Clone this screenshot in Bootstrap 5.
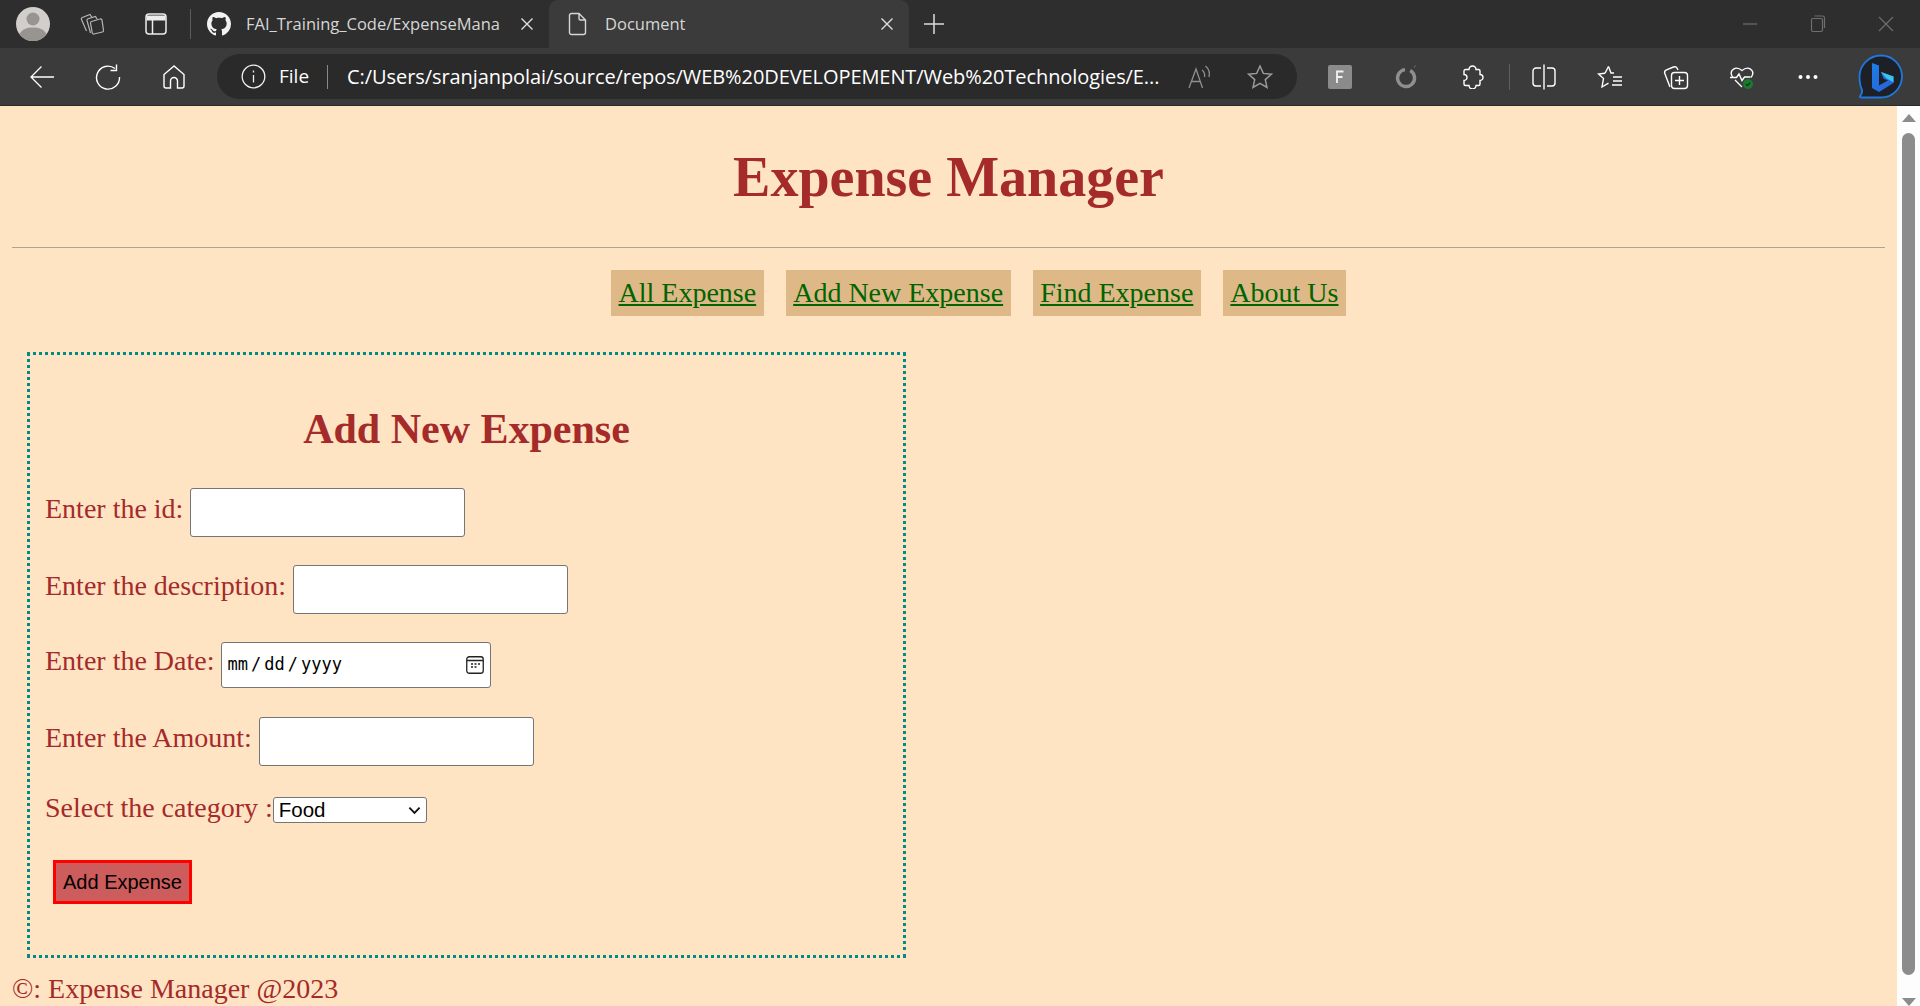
<!DOCTYPE html>
<html lang="en">
<head>
  <meta charset="UTF-8">
  <meta name="viewport" content="width=device-width, initial-scale=1">
  <title>Document</title>
  <link href="https://cdn.jsdelivr.net/npm/bootstrap@5.3.3/dist/css/bootstrap.min.css" rel="stylesheet">
  <style>
    html, body { height: 100%; overflow: hidden; }
    body { background: #ffe4c4; font-family: "Liberation Serif", serif; }

    /* browser chrome */
    .tab-strip { height: 48px; background: #2e2e2e; color: #d6d6d6; font-family: "Open Sans", sans-serif; font-size: 16.500px; }
    .strip-slot { width: 64px; height: 48px; }
    .avatar-slot { width: 60px; padding-left: 16px; }
    .strip-sep { width: 1px; height: 30px; background: #5c5c5c; margin: 0 4px 0 2px; }
    .page-tab { height: 48px; }
    .tab-one { width: 354px; padding-left: 12px; padding-right: 15px; }
    .tab-two { width: 360px; background: #3b3b3b; border-radius: 9px 9px 0 0; padding-left: 19px; padding-right: 15px; }
    .tab-title { white-space: nowrap; flex: 1; margin-left: 15px; margin-right: 8px; }
    .tab-two .tab-title { margin-left: 17px; }
    .new-tab { width: 50px; margin-left: 0; }
    .win-btn { width: 68px; }

    .tool-bar { height: 58px; background: #3b3b3b; border-bottom: 1px solid #2a2a2a; padding-left: 9px; color: #fff; }
    .tool-slot { width: 66px; height: 45px; flex: none; }
    .addr-pill { width: 1080px; height: 45px; background: #2a2a2a; border-radius: 23px; margin-left: 10px; margin-right: 10px; padding-left: 24px; font-family: "Open Sans", sans-serif; font-size: 19px; flex: none; }
    .addr-file { margin-left: 13px; }
    .addr-sep { width: 1px; height: 24px; background: #8a8a8a; margin-left: 18px; margin-right: 19px; }
    .addr-url { width: 823px; white-space: nowrap; font-size: 20px; letter-spacing: -.08px; }
    .addr-slot { width: 60px; }
    .tool-sep { width: 1px; height: 26px; background: #5e5e5e; margin-left: 4px; margin-right: 1px; }
    .bing-slot { width: 72px; margin-left: 3px; flex: none; }

    /* page */
    .page-row { height: 900px; }
    .page-body { padding: 0 12px; overflow: hidden; }
    .scroll-rail { width: 23px; background: #fdfdfd; position: relative; }
    .rail-thumb { width: 13px; height: 842px; margin: 27px auto 0; background: #8c8c8c; border-radius: 7px; }
    .rail-up, .rail-down { position: absolute; left: 5px; width: 0; height: 0; border-left: 7px solid transparent; border-right: 7px solid transparent; }
    .rail-up { top: 8px; border-bottom: 8px solid #8c8c8c; }
    .rail-down { bottom: 0; border-top: 8px solid #8c8c8c; }

    .site-title { font-family: "Liberation Serif", serif; font-size: 56px; font-weight: 700; color: #a52a2a; line-height: 64px; margin: 39px 0 38px; }
    .site-rule { margin: 0; border-top: 1px solid #a9a49c; opacity: 1; }
    .site-links { margin-top: 22px; gap: 22px; padding-left: 60px; }
    .site-link { display: block; height: 46px; padding: 0 7.5px; background: #deb887; color: #006400; font-size: 28px; line-height: 46px; }
    .site-link:hover { color: #006400; }

    .add-box { width: 879px; height: 606px; margin: 36px 0 0 15px; border: 3px dotted #008b8b; padding: 0 15px; color: #a52a2a; font-size: 28px; }
    .add-title { font-family: "Liberation Serif", serif; font-size: 42px; font-weight: 700; color: #a52a2a; line-height: 48px; margin: 50px 0 0; }
    .add-row { line-height: 32px; }
    .add-row .form-control { display: inline-block; width: 275px; height: 49px; padding: 1px 2px; border: 1px solid #767676; border-radius: 3px; vertical-align: baseline; }
    .add-row input[type=date] { width: 270px; height: 46px; padding: 1px 6px 1px 5px; font-family: "DejaVu Sans Mono", monospace; font-size: 17px; color: #000; }
    .add-row input[type=date]::-webkit-datetime-edit-text { padding: 0 3px; }
    .add-row input[type=date]::-webkit-calendar-picker-indicator {
      width: 18px; height: 18px; padding: 0; margin: 0 0 0 4px;
      background: url("data:image/svg+xml,%3Csvg xmlns='http://www.w3.org/2000/svg' viewBox='0 0 18 18' fill='none'%3E%3Crect x='.75' y='.75' width='16.500' height='16.500' rx='2.500' stroke='%23222' stroke-width='1.300'/%3E%3Cpath d='M1 4.500h16' stroke='%23222' stroke-width='1.300'/%3E%3Cpath d='M5 8h2M8.500 8h2M12 8h2M5 11h2M8.500 11h2' stroke='%23222' stroke-width='1.500'/%3E%3C/svg%3E") center / contain no-repeat;
    }
    .row-id { margin-top: 35px; }
    .row-desc { margin-top: 28px; }
    .row-date { margin-top: 28px; }
    .row-amount { margin-top: 29px; }
    .row-cat { margin-top: 26px; }
    .cat-select { -webkit-appearance: none; appearance: none; width: 154px; height: 26px; padding: 0 5px; font-family: "Liberation Sans", sans-serif; font-size: 20.500px; line-height: 24px; border: 1px solid #767676; border-radius: 3px; color: #000; vertical-align: baseline;
      background: #fff url("data:image/svg+xml,%3Csvg xmlns='http://www.w3.org/2000/svg' viewBox='0 0 14 9' fill='none'%3E%3Cpath d='M1.500 1.500 7 7l5.500-5.500' stroke='%23111' stroke-width='2'/%3E%3C/svg%3E") right 5px center / 13px 9px no-repeat; }
    .add-btn { display: block; width: 139px; height: 44px; margin: 36px 0 0 8px; padding: 0; background: #cd5c5c; border: 3px solid #f00; border-radius: 0; color: #000; font-family: "Liberation Sans", sans-serif; font-size: 20px; line-height: 38px; }
    .add-btn:hover { background: #cd5c5c; border-color: #f00; color: #000; }
    .site-foot { color: #a52a2a; font-size: 28px; line-height: 32px; margin-top: 15px; }
  </style>
</head>
<body>

<!-- barra de abas -->
<div class="tab-strip d-flex align-items-center">
  <div class="strip-slot avatar-slot d-flex align-items-center">
    <svg width="34" height="34" viewBox="0 0 34 34"><circle cx="17" cy="17" r="17" fill="#d0cfcb"/><circle cx="17" cy="12" r="6.500" fill="#989590"/><path d="M3.500 27.500C6 22 11 20.500 17 20.500s11 1.500 13.500 7a17 17 0 0 1-27 0z" fill="#989590"/></svg>
  </div>
  <div class="strip-slot d-flex align-items-center justify-content-center">
    <svg width="26" height="26" viewBox="0 0 26 26" fill="none" stroke="#b5b5b5" stroke-width="1.200"><path d="M12.500 10.500 21 8a1.500 1.500 0 0 1 2 1.200l1.500 10a1.500 1.500 0 0 1-1.200 1.800L15 23a1.500 1.500 0 0 1-1.800-1.300L11.500 12a1.500 1.500 0 0 1 1-1.500z"/><path d="M11.500 22 8 9.500a1.500 1.500 0 0 1 1-1.800L16.500 5.500 18 8"/><path d="M7.500 20 2.500 8.500a1.500 1.500 0 0 1 .8-2L11 3.500l2 3"/></svg>
  </div>
  <div class="strip-slot d-flex align-items-center justify-content-center">
    <svg width="22" height="22" viewBox="0 0 22 22" fill="none" stroke="#ededed" stroke-width="1.500"><rect x="1" y="1" width="20" height="20" rx="3"/><path d="M1.500 2.500h19v5h-19z" fill="#ededed" stroke="none"/><path d="M7.500 7v14"/></svg>
  </div>
  <div class="strip-sep"></div>
  <div class="page-tab tab-one d-flex align-items-center">
    <svg width="24" height="24" viewBox="0 0 16 16" fill="#f2f2f2"><path d="M8 0C3.580 0 0 3.580 0 8c0 3.540 2.290 6.530 5.470 7.590.4.070.55-.17.55-.38 0-.19-.01-.82-.01-1.490-2.010.37-2.530-.49-2.690-.94-.09-.23-.48-.94-.82-1.130-.28-.15-.68-.52-.01-.53.63-.01 1.080.58 1.230.82.720 1.210 1.870.87 2.330.66.070-.52.280-.87.510-1.070-1.780-.2-3.640-.89-3.640-3.950 0-.87.310-1.590.820-2.150-.08-.2-.36-1.020.08-2.120 0 0 .67-.21 2.200.82.640-.18 1.320-.27 2-.27s1.360.09 2 .27c1.530-1.040 2.200-.82 2.200-.82.440 1.100.16 1.920.08 2.120.51.560.82 1.270.82 2.150 0 3.070-1.870 3.750-3.650 3.950.29.250.54.730.54 1.480 0 1.070-.01 1.930-.01 2.200 0 .21.150.46.550.38A8.010 8.010 0 0 0 16 8c0-4.420-3.580-8-8-8z"/></svg>
    <span class="tab-title">FAI_Training_Code/ExpenseMana</span>
    <svg width="14" height="14" viewBox="0 0 14 14" stroke="#e0e0e0" stroke-width="1.400"><path d="M1.500 1.500l11 11M12.500 1.500l-11 11"/></svg>
  </div>
  <div class="page-tab tab-two d-flex align-items-center">
    <svg width="20" height="24" viewBox="0 0 20 24" fill="none" stroke="#d6d6d6" stroke-width="1.400"><path d="M3.500 1.500h7.500l6.500 6.500v12.500a2 2 0 0 1-2 2h-12a2 2 0 0 1-2-2v-17a2 2 0 0 1 2-2zM11 1.500v5a1.500 1.500 0 0 0 1.500 1.500h5"/></svg>
    <span class="tab-title">Document</span>
    <svg width="14" height="14" viewBox="0 0 14 14" stroke="#e0e0e0" stroke-width="1.400"><path d="M1.500 1.500l11 11M12.500 1.500l-11 11"/></svg>
  </div>
  <div class="strip-slot new-tab d-flex align-items-center justify-content-center">
    <svg width="22" height="22" viewBox="0 0 22 22" stroke="#dcdcdc" stroke-width="1.500"><path d="M11 1v20M1 11h20"/></svg>
  </div>
  <div class="ms-auto d-flex align-items-center">
    <div class="strip-slot win-btn d-flex align-items-center justify-content-center">
      <svg width="16" height="16" viewBox="0 0 16 16" stroke="#6e6e6e" stroke-width="1.200"><path d="M1 8h14"/></svg>
    </div>
    <div class="strip-slot win-btn d-flex align-items-center justify-content-center">
      <svg width="16" height="18" viewBox="0 0 16 18" fill="none" stroke="#6e6e6e" stroke-width="1.200"><rect x="1.500" y="3.500" width="11" height="13" rx="1.500"/><path d="M4.500 1h8a2 2 0 0 1 2 2v10"/></svg>
    </div>
    <div class="strip-slot win-btn d-flex align-items-center justify-content-center">
      <svg width="16" height="16" viewBox="0 0 16 16" stroke="#6e6e6e" stroke-width="1.200"><path d="M1 1l14 14M15 1L1 15"/></svg>
    </div>
  </div>
</div>

<!-- barra de endereco -->
<div class="tool-bar d-flex align-items-center">
  <div class="tool-slot d-flex align-items-center justify-content-center">
    <svg width="26" height="24" viewBox="0 0 26 24" fill="none" stroke="#fff" stroke-width="1.300"><path d="M25 12H2M12.500 1.500 2 12l10.500 10.500"/></svg>
  </div>
  <div class="tool-slot d-flex align-items-center justify-content-center">
    <svg width="26" height="26" viewBox="0 0 26 26" fill="none" stroke="#fff" stroke-width="1.400"><path d="M20 4.500A11.500 11.500 0 1 0 24.500 13M21.500 .5v6h-6"/></svg>
  </div>
  <div class="tool-slot d-flex align-items-center justify-content-center">
    <svg width="24" height="26" viewBox="0 0 24 26" fill="none" stroke="#fff" stroke-width="1.400"><path d="M12 2 2 10.500V22a2 2 0 0 0 2 2h4.500v-7a3.500 3.500 0 0 1 7 0v7H20a2 2 0 0 0 2-2V10.500z"/></svg>
  </div>
  <div class="addr-pill d-flex align-items-center">
    <svg width="25" height="25" viewBox="0 0 25 25" fill="none" stroke="#f0f0f0" stroke-width="1.300"><circle cx="12.500" cy="12.500" r="11.300"/><path d="M12.500 11v7.500M12.500 6.500v2"/></svg>
    <span class="addr-file">File</span>
    <span class="addr-sep"></span>
    <span class="addr-url">C:/Users/sranjanpolai/source/repos/WEB%20DEVELOPEMENT/Web%20Technologies/E...</span>
    <div class="addr-slot d-flex justify-content-center">
      <svg width="26" height="26" viewBox="0 0 26 26" fill="none" stroke="#8f8f8f" stroke-width="1.300"><path d="M2 24 9 5l6.500 19M4.500 17.500h9M15 6c2.500 2 3 4.500 2.500 7M18.500 2c3.500 3 4.500 7 3.500 11"/></svg>
    </div>
    <div class="addr-slot d-flex justify-content-center">
      <svg width="26" height="26" viewBox="0 0 26 26" fill="none" stroke="#9a9a9a" stroke-width="1.500"><path d="m13 2 3.300 7.400 8 .8-6 5.400 1.700 7.900-7-4.100-7 4.100 1.700-7.900-6-5.400 8-.8z"/></svg>
    </div>
  </div>
  <div class="tool-slot d-flex align-items-center justify-content-center">
    <svg width="24" height="24" viewBox="0 0 24 24"><rect width="24" height="24" rx="2" fill="#8b8b8b"/><path d="M9 18V6.500h6.500M9 12h5.500" fill="none" stroke="#f2f2f2" stroke-width="1.800"/></svg>
  </div>
  <div class="tool-slot d-flex align-items-center justify-content-center">
    <svg width="26" height="26" viewBox="0 0 26 26" fill="none"><path d="M17.200 6.600A8.500 8.500 0 1 1 12 5.600" stroke="#8f8f8f" stroke-width="3.400"/><path d="M21 3.500l1.500-2" stroke="#777" stroke-width="1"/></svg>
  </div>
  <div class="tool-slot d-flex align-items-center justify-content-center">
    <svg width="24" height="24" viewBox="0 0 24 24" fill="none" stroke="#fff" stroke-width="1.400"><path d="M9 4.500a3.500 3.500 0 0 1 7 0h2.500A1.500 1.500 0 0 1 20 6v3.500a3 3 0 0 1 0 6V19a1.500 1.500 0 0 1-1.500 1.500H16a3.500 3.500 0 0 1-7 0H5.500A1.500 1.500 0 0 1 4 19v-3.500a3 3 0 0 0 0-6V6a1.500 1.500 0 0 1 1.500-1.500z"/></svg>
  </div>
  <div class="tool-sep"></div>
  <div class="tool-slot d-flex align-items-center justify-content-center">
    <svg width="24" height="26" viewBox="0 0 24 26" fill="none" stroke="#fff" stroke-width="1.400"><path d="M9 4H4a3 3 0 0 0-3 3v12a3 3 0 0 0 3 3h5M15 4h5a3 3 0 0 1 3 3v12a3 3 0 0 1-3 3h-5"/><path d="M12 .5v25"/></svg>
  </div>
  <div class="tool-slot d-flex align-items-center justify-content-center">
    <svg width="26" height="24" viewBox="0 0 26 24" fill="none" stroke="#fff" stroke-width="1.400"><path d="m11.500 1.500 2.500 6.500h3M8 8.300 1.500 9l5 4.500L5 22l6.500-3.800"/><path d="M8 8.300 11.500 1.500M16 12h9M16 16h9M15 20h10"/></svg>
  </div>
  <div class="tool-slot d-flex align-items-center justify-content-center">
    <svg width="26" height="26" viewBox="0 0 26 26" fill="none" stroke="#fff" stroke-width="1.400"><path d="M7 23 1.800 9.500a3 3 0 0 1 1.700-3.700l7-2.800a3 3 0 0 1 3.800 1.500L15 6"/><rect x="8.500" y="8.500" width="16" height="16" rx="3"/><path d="M16.500 12v9M12 16.500h9"/></svg>
  </div>
  <div class="tool-slot d-flex align-items-center justify-content-center">
    <svg width="26" height="26" viewBox="0 0 26 26" fill="none"><path d="M4 13.500 2.800 11.500C.5 6.500 6.500 1 13 6.500 19.500 1 25.500 6.500 23.200 11.500L22 13.500M6 16l7 7" stroke="#fff" stroke-width="1.400"/><path d="M1 13.500h6.500l2.500-3.500 3 6.500 2.500-3.500h6" stroke="#fff" stroke-width="1.400"/><circle cx="19" cy="20" r="5" fill="#1c7a2e"/><path d="m16.800 20 1.600 1.600 2.800-3" stroke="#0c3313" stroke-width="1.200"/></svg>
  </div>
  <div class="tool-slot d-flex align-items-center justify-content-center">
    <svg width="20" height="6" viewBox="0 0 20 6" fill="#fff"><circle cx="2.500" cy="3" r="2"/><circle cx="10" cy="3" r="2"/><circle cx="17.500" cy="3" r="2"/></svg>
  </div>
  <div class="bing-slot d-flex align-items-center justify-content-center">
    <svg width="46" height="46" viewBox="0 0 46 46"><defs><linearGradient id="bing-b" x1="0" y1="0" x2="1" y2="1"><stop offset="0" stop-color="#1b7fe8"/><stop offset="1" stop-color="#2a5fd8"/></linearGradient></defs><path d="M24 1.500c11.500 0 21 9.500 21 21s-9.500 21-21 21H4c-1 0-1.500-1-.8-1.700 1.500-1.600 2.300-3.500 1.800-6C3.500 33 2.500 28 2.500 22.500 2.500 11 12.500 1.500 24 1.500z" fill="#1d2026" stroke="#1f78e0" stroke-width="1.800"/><path d="M15 9l7 2.500v20l9-5-4.500-2-2.500-6.500 12.500 4.500v6.500L22 38l-7-4z" fill="url(#bing-b)"/><path d="M24 18l12.500 4.500v6l-7.500-4.500z" fill="#39c4e8"/></svg>
  </div>
</div>

<div class="page-row d-flex">
  <div class="page-body flex-grow-1">
    <h1 class="site-title text-center">Expense Manager</h1>
    <hr class="site-rule">
    <nav class="site-links d-flex justify-content-center">
      <a class="site-link" href="#">All Expense</a>
      <a class="site-link" href="#">Add New Expense</a>
      <a class="site-link" href="#">Find Expense</a>
      <a class="site-link" href="#">About Us</a>
    </nav>

    <form class="add-box">
      <h2 class="add-title text-center">Add New Expense</h2>
      <div class="add-row row-id"><label for="exp-id">Enter the id:</label> <input id="exp-id" type="text" class="form-control"></div>
      <div class="add-row row-desc"><label for="exp-desc">Enter the description:</label> <input id="exp-desc" type="text" class="form-control"></div>
      <div class="add-row row-date"><label for="exp-date">Enter the Date:</label> <input id="exp-date" type="date" class="form-control"></div>
      <div class="add-row row-amount"><label for="exp-amount">Enter the Amount:</label> <input id="exp-amount" type="text" class="form-control"></div>
      <div class="add-row row-cat"><label for="exp-cat">Select the category :</label><select id="exp-cat" class="cat-select"><option>Food</option></select></div>
      <button type="button" class="btn add-btn">Add Expense</button>
    </form>

    <div class="site-foot">©: Expense Manager @2023</div>
  </div>
  <div class="scroll-rail flex-shrink-0">
    <div class="rail-up"></div>
    <div class="rail-thumb"></div>
    <div class="rail-down"></div>
  </div>
</div>

<script src="https://cdn.jsdelivr.net/npm/bootstrap@5.3.3/dist/js/bootstrap.bundle.min.js"></script>
</body>
</html>
